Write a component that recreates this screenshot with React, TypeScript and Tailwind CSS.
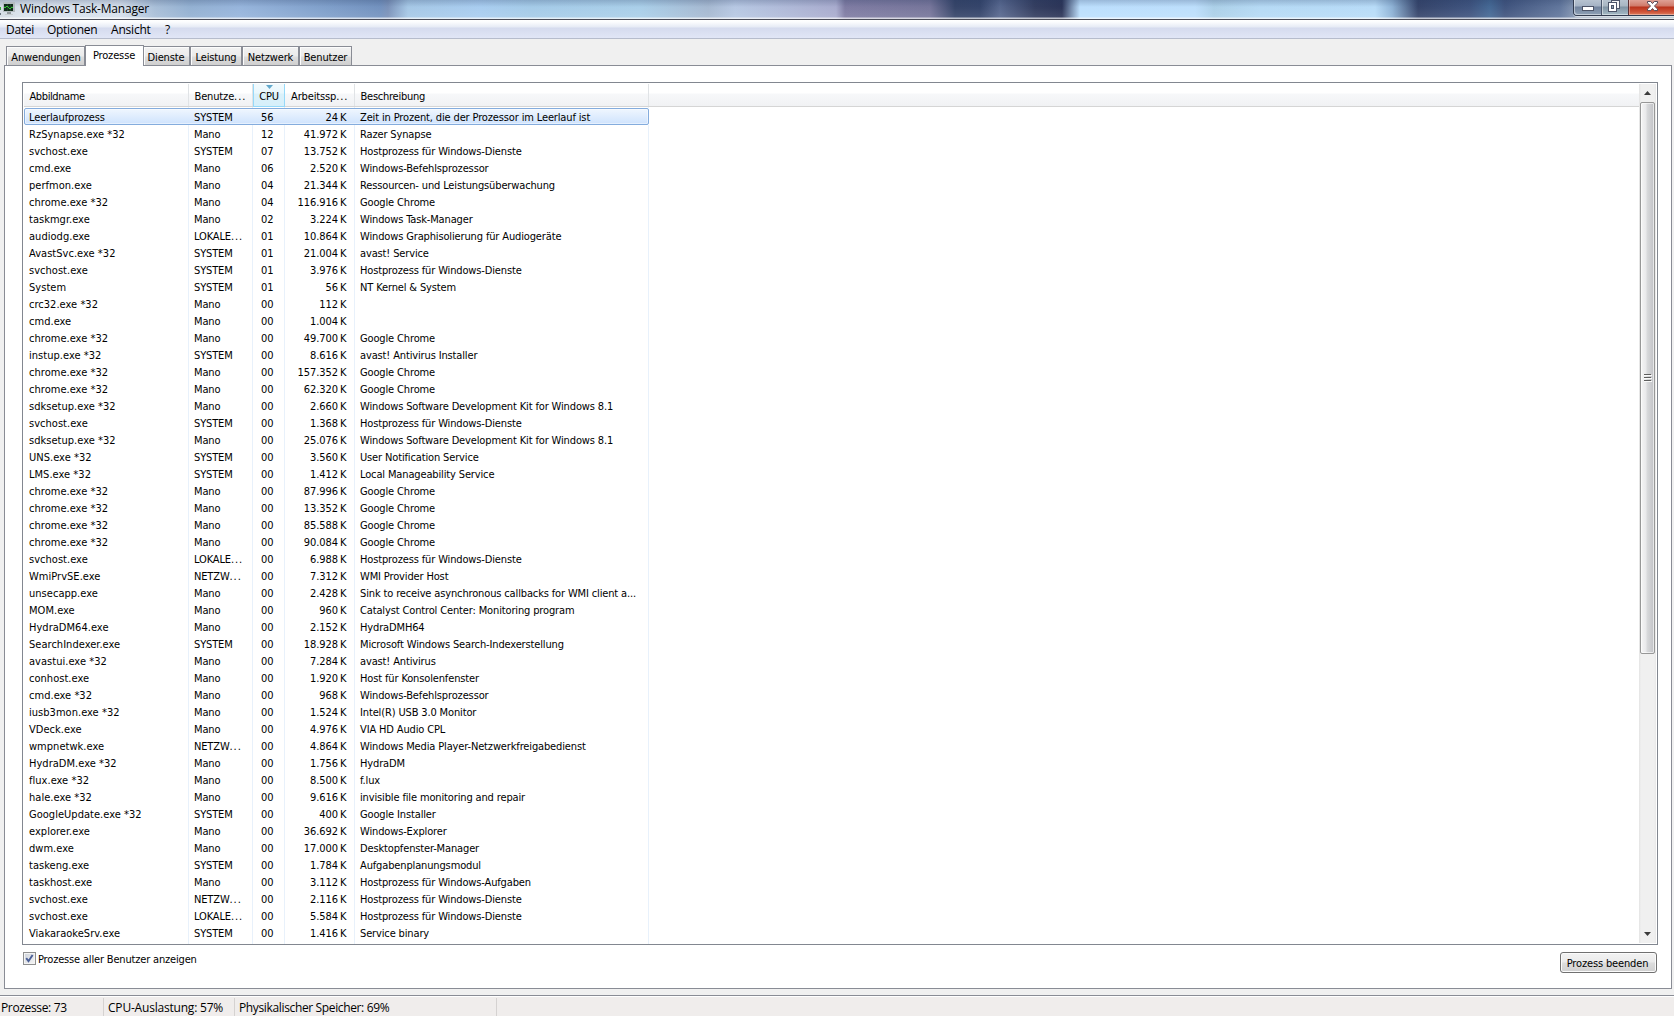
import type { ReactNode } from "react";
import { clsx } from "clsx";

type Process = [name: string, user: string, cpu: string, memory: string, description: string];

const processes: Process[] = [
    ["Leerlaufprozess", "SYSTEM", "56", "24", "Zeit in Prozent, die der Prozessor im Leerlauf ist"],
    ["RzSynapse.exe *32", "Mano", "12", "41.972", "Razer Synapse"],
    ["svchost.exe", "SYSTEM", "07", "13.752", "Hostprozess für Windows-Dienste"],
    ["cmd.exe", "Mano", "06", "2.520", "Windows-Befehlsprozessor"],
    ["perfmon.exe", "Mano", "04", "21.344", "Ressourcen- und Leistungsüberwachung"],
    ["chrome.exe *32", "Mano", "04", "116.916", "Google Chrome"],
    ["taskmgr.exe", "Mano", "02", "3.224", "Windows Task-Manager"],
    ["audiodg.exe", "LOKALE...", "01", "10.864", "Windows Graphisolierung für Audiogeräte"],
    ["AvastSvc.exe *32", "SYSTEM", "01", "21.004", "avast! Service"],
    ["svchost.exe", "SYSTEM", "01", "3.976", "Hostprozess für Windows-Dienste"],
    ["System", "SYSTEM", "01", "56", "NT Kernel & System"],
    ["crc32.exe *32", "Mano", "00", "112", ""],
    ["cmd.exe", "Mano", "00", "1.004", ""],
    ["chrome.exe *32", "Mano", "00", "49.700", "Google Chrome"],
    ["instup.exe *32", "SYSTEM", "00", "8.616", "avast! Antivirus Installer"],
    ["chrome.exe *32", "Mano", "00", "157.352", "Google Chrome"],
    ["chrome.exe *32", "Mano", "00", "62.320", "Google Chrome"],
    ["sdksetup.exe *32", "Mano", "00", "2.660", "Windows Software Development Kit for Windows 8.1"],
    ["svchost.exe", "SYSTEM", "00", "1.368", "Hostprozess für Windows-Dienste"],
    ["sdksetup.exe *32", "Mano", "00", "25.076", "Windows Software Development Kit for Windows 8.1"],
    ["UNS.exe *32", "SYSTEM", "00", "3.560", "User Notification Service"],
    ["LMS.exe *32", "SYSTEM", "00", "1.412", "Local Manageability Service"],
    ["chrome.exe *32", "Mano", "00", "87.996", "Google Chrome"],
    ["chrome.exe *32", "Mano", "00", "13.352", "Google Chrome"],
    ["chrome.exe *32", "Mano", "00", "85.588", "Google Chrome"],
    ["chrome.exe *32", "Mano", "00", "90.084", "Google Chrome"],
    ["svchost.exe", "LOKALE...", "00", "6.988", "Hostprozess für Windows-Dienste"],
    ["WmiPrvSE.exe", "NETZW...", "00", "7.312", "WMI Provider Host"],
    ["unsecapp.exe", "Mano", "00", "2.428", "Sink to receive asynchronous callbacks for WMI client a..."],
    ["MOM.exe", "Mano", "00", "960", "Catalyst Control Center: Monitoring program"],
    ["HydraDM64.exe", "Mano", "00", "2.152", "HydraDMH64"],
    ["SearchIndexer.exe", "SYSTEM", "00", "18.928", "Microsoft Windows Search-Indexerstellung"],
    ["avastui.exe *32", "Mano", "00", "7.284", "avast! Antivirus"],
    ["conhost.exe", "Mano", "00", "1.920", "Host für Konsolenfenster"],
    ["cmd.exe *32", "Mano", "00", "968", "Windows-Befehlsprozessor"],
    ["iusb3mon.exe *32", "Mano", "00", "1.524", "Intel(R) USB 3.0 Monitor"],
    ["VDeck.exe", "Mano", "00", "4.976", "VIA HD Audio CPL"],
    ["wmpnetwk.exe", "NETZW...", "00", "4.864", "Windows Media Player-Netzwerkfreigabedienst"],
    ["HydraDM.exe *32", "Mano", "00", "1.756", "HydraDM"],
    ["flux.exe *32", "Mano", "00", "8.500", "f.lux"],
    ["hale.exe *32", "Mano", "00", "9.616", "invisible file monitoring and repair"],
    ["GoogleUpdate.exe *32", "SYSTEM", "00", "400", "Google Installer"],
    ["explorer.exe", "Mano", "00", "36.692", "Windows-Explorer"],
    ["dwm.exe", "Mano", "00", "17.000", "Desktopfenster-Manager"],
    ["taskeng.exe", "SYSTEM", "00", "1.784", "Aufgabenplanungsmodul"],
    ["taskhost.exe", "Mano", "00", "3.112", "Hostprozess für Windows-Aufgaben"],
    ["svchost.exe", "NETZW...", "00", "2.116", "Hostprozess für Windows-Dienste"],
    ["svchost.exe", "LOKALE...", "00", "5.584", "Hostprozess für Windows-Dienste"],
    ["ViakaraokeSrv.exe", "SYSTEM", "00", "1.416", "Service binary"],
];

const columns = "grid grid-cols-[165px_64px_32px_70px_294px] w-[625px]";
const tahoma = "font-['DejaVu_Sans_Condensed','DejaVu_Sans',sans-serif] text-[11px] tracking-[-0.14px]";

// the dots of a cut-off label stand further apart than its letters
const Clipped = ({ text }: { text: string }) => {
    if (!text.endsWith("...")) return <>{text}</>;
    return <>{text.slice(0, -3)}<span className="tracking-[0.9px]">...</span></>;
};

const TitleBar = () => (
    <div className="relative h-[20px] shrink-0 flex justify-between overflow-hidden border-b border-[#4b4d59] bg-[linear-gradient(90deg,#d3dce4_0px,#dbe4ee_30px,#d6e0ec_120px,#a9bfd8_155px,#94b1d2_190px,#97b5dc_240px,#7f9fca_330px,#7392bf_380px,#7b92b9_388px,#a6c8e6_408px,#a9cdf0_480px,#a5cbe8_530px,#aacfe9_640px,#a6b9d1_708px,#b7c8e3_735px,#a9acce_836px,#7f7ca3_845px,#77769b_930px,#364569_955px,#35456b_980px,#58688f_1000px,#343e60_1035px,#2c3558_1062px,#bcdffd_1080px,#bddffc_1195px,#acd0e8_1214px,#b6daf5_1260px,#b8dcf8_1375px,#8fb3d6_1392px,#36456b_1418px,#3f547f_1470px,#456995_1490px,#41557f_1505px,#62779d_1560px,#8fa0b8_1580px,#9db4bd_1674px)]">
        {/* glass shading */}
        <div className="absolute inset-0 bg-[linear-gradient(180deg,rgba(30,50,90,0.22)_0px,rgba(30,50,90,0)_7px,rgba(255,255,255,0.08)_17px,rgba(255,255,255,0.7)_18px)]" />
        <div className="relative flex items-center h-[18px]">
            <svg width="20" height="18" viewBox="0 0 20 18" shapeRendering="crispEdges">
                <rect x="0" y="7" width="1" height="3" fill="#39a83b" />
                <rect x="0" y="13" width="1" height="2" fill="#6b7681" />
                <rect x="3" y="2" width="12" height="10" fill="#b4bcc0" />
                <rect x="4" y="4" width="9" height="7" fill="#10291a" />
                <path d="M4 6.5h9M7.5 4v7M10.5 4v7" stroke="#1d4028" strokeWidth="1" fill="none" />
                <path d="M4 7.5h2M6 6.5h2M8 7.5h1M9 8.5h2M11 7.5h2" stroke="#35c637" strokeWidth="1" fill="none" />
                <rect x="7" y="12" width="4" height="2" fill="#929a9e" />
                <rect x="5" y="14" width="8" height="1" fill="#c7cdd0" />
            </svg>
            <span className="text-xs tracking-[-0.2px] leading-[18px]">Windows Task-Manager</span>
        </div>
        <div className="relative flex h-[16px] w-[101px] rounded-bl-[4px] border-l border-b border-[#323c50] shadow-[0_1px_0_rgba(255,255,255,0.6)]">
            <div className="w-[28px] h-full border-r border-[#49566c] rounded-bl-[3px] bg-[linear-gradient(180deg,#b7c3d0_0px,#a5b3c5_6px,#71839d_7px,#8ea0b5_15px)] shadow-[inset_1px_-1px_0_rgba(255,255,255,0.45)]">
                <svg width="27" height="15" viewBox="0 0 27 15" shapeRendering="crispEdges">
                    <rect x="8.5" y="6.5" width="11" height="4" fill="#fff" stroke="#4c5468" />
                </svg>
            </div>
            <div className="w-[27px] h-full border-r border-[#5c3136] bg-[linear-gradient(180deg,#b7c3cf_0px,#a8b6c2_6px,#8093a3_7px,#a5bbc6_15px)] shadow-[inset_1px_-1px_0_rgba(255,255,255,0.45)]">
                <svg width="26" height="15" viewBox="0 0 26 15" shapeRendering="crispEdges">
                    <rect x="9.5" y="0.5" width="8" height="8" fill="#f5f5f5" stroke="#4c5468" />
                    <rect x="6.5" y="2.5" width="8" height="9" fill="#fff" stroke="#4c5468" />
                    <rect x="9.5" y="5.5" width="2" height="3" fill="#8fa3b5" stroke="#4c5468" />
                </svg>
            </div>
            <div className="w-[46px] h-full bg-[linear-gradient(180deg,#dfa095_0px,#d07a6a_6px,#b9321c_7px,#d0553a_12px,#dc8060_15px)] shadow-[inset_1px_-1px_0_rgba(255,255,255,0.35)]">
                <svg width="45" height="15" viewBox="0 0 45 15">
                    <path d="M18.5 1.5h3.2l1.8 2.1 1.8-2.1h3.2v1.6L25.4 6l3.1 3v1.6h-3.2l-1.8-2.1-1.8 2.1h-3.2V9l3.1-3-3.1-2.9z" fill="#fff" stroke="#574a58" />
                </svg>
            </div>
        </div>
    </div>
);

const MenuBar = () => (
    <div className="flex h-[19px] shrink-0 border-b border-[#b6bccc] pl-[6px] text-xs leading-[20px] bg-[linear-gradient(180deg,#ffffff_0px,#fbfcfe_2px,#e6ebf5_7px,#d5dbee_8px,#e1e6f6_18px)]">
        <span className="w-[41px] tracking-[-0.3px]">Datei</span>
        <span className="w-[64px] tracking-[-0.3px]">Optionen</span>
        <span className="w-[54px] tracking-[-0.2px]">Ansicht</span>
        <span>?</span>
    </div>
);

const Tab = ({ width, children }: { width: string; children: ReactNode }) => (
    <div className={clsx("h-[19px] border border-b-0 border-[#898c95] text-center leading-[21px] bg-[linear-gradient(180deg,#f2f2f2_0px,#ebebeb_9px,#dddddd_10px,#cfcfcf_18px)] shadow-[inset_1px_1px_0_#fcfcfc]", width)}>
        {children}
    </div>
);

const Tabs = () => (
    <div className={clsx("relative flex h-[26px] shrink-0 items-end pl-[6px]", tahoma)}>
        <Tab width="w-[79px] pl-px">Anwendungen</Tab>
        <div className="relative z-10 -mb-px h-[21px] w-[59px] border border-b-0 border-[#898c95] bg-white pr-px text-center leading-[19px]">Prozesse</div>
        <Tab width="w-[46px] border-l-0 pr-px">Dienste</Tab>
        <Tab width="w-[52px]">Leistung</Tab>
        <Tab width="w-[57px]">Netzwerk</Tab>
        <Tab width="w-[53px]">Benutzer</Tab>
    </div>
);

const TableHeader = () => (
    <div className="h-[23px] border-b border-[#d5d5d5] bg-[linear-gradient(180deg,#ffffff_0px,#ffffff_9px,#f7f8fa_10px,#f1f2f4_22px)]">
        <div className={clsx(columns, "h-[22px] leading-[26px]")}>
            <div className="h-[22px] border-r border-[#e0e3e6] pl-[5.5px] tracking-[-0.4px]">Abbildname</div>
            <div className="h-[22px] border-r border-[#e0e3e6] pl-[5.5px]"><Clipped text="Benutze..." /></div>
            <div className="relative border-x border-[#96d9f9] text-center h-[23px] border-b bg-[linear-gradient(180deg,#f2fafd_0px,#e9f7fd_9px,#dbf1fa_10px,#d6effa_22px)]">
                CPU
                <svg className="absolute left-[12px] top-[1px]" width="7" height="4" viewBox="0 0 7 4">
                    <path d="M0 0h7L3.5 4z" fill="#62a8cc" />
                </svg>
            </div>
            <div className="h-[22px] border-r border-[#e0e3e6] pl-[6px]"><Clipped text="Arbeitssp..." /></div>
            <div className="h-[22px] border-r border-[#e0e3e6] pl-[5.5px] tracking-[-0.25px]">Beschreibung</div>
        </div>
    </div>
);

const Row = ({ process, selected }: { process: Process; selected: boolean }) => {
    const [name, user, cpu, memory, description] = process;
    const cell = clsx("relative h-[17px] border-r whitespace-nowrap", selected ? "border-transparent" : "border-[#e8f1fb]");

    return (
        <div className={clsx(columns, "relative h-[17px] leading-[20px]")}>
            {selected && (
                <div className="absolute inset-0 rounded-[2px] border border-[#84acdd] bg-[linear-gradient(180deg,#eff6fe,#cfe3fd)] shadow-[inset_0_0_0_1px_rgba(255,255,255,0.45)]" />
            )}
            <div className={clsx(cell, "pl-[5px]", selected ? "tracking-[-0.14px]" : "tracking-[0.03px]")}>{name}</div>
            <div className={clsx(cell, "pl-[5px]")}><Clipped text={user} /></div>
            <div className={clsx(cell, "pl-[8px] tracking-normal")}>{cpu}</div>
            <div className={clsx(cell, "flex justify-end gap-[2px] pr-[7.5px] tracking-[-0.05px]")}>
                <span>{memory}</span>
                <span>K</span>
            </div>
            <div className={clsx(cell, "pl-[5px]")}>{description}</div>
        </div>
    );
};

// thin strip that carries the column lines on above and below the rows
const GridStrip = ({ height }: { height: string }) => (
    <div className={clsx(columns, height)}>
        {[0, 1, 2, 3, 4].map(i => <div key={i} className="border-r border-[#e8f1fb]" />)}
    </div>
);

const ScrollBar = () => (
    <div className="flex w-[17px] shrink-0 flex-col items-center bg-[linear-gradient(90deg,#e3e3e3_0px,#f0f0f0_2px,#f0f0f0_15px,#e8e8e8_17px)]">
        <svg width="17" height="18" viewBox="0 0 17 18">
            <path d="M5 11l3.5-4 3.5 4z" fill="#3c3c3c" />
        </svg>
        <div className="flex h-[552px] w-[15px] items-center justify-center rounded-[2px] border border-[#979797] bg-[linear-gradient(90deg,#f5f5f5_0px,#e9e9eb_5px,#d9dadc_6px,#c4c5c9_12px)] pb-[2px] shadow-[inset_0_0_0_1px_rgba(255,255,255,0.6)]">
            <svg width="8" height="9" viewBox="0 0 8 9" shapeRendering="crispEdges">
                <path d="M0 1.5h7M0 4.5h7M0 7.5h7" stroke="#5e5e5e" />
                <path d="M0 2.5h8M0 5.5h8M0 8.5h8" stroke="#fafafa" />
            </svg>
        </div>
        <div className="grow" />
        <svg width="17" height="18" viewBox="0 0 17 18">
            <path d="M5 7l3.5 4L12 7z" fill="#3c3c3c" />
        </svg>
    </div>
);

const ProcessList = () => (
    <div className="flex h-[863px] w-[1636px] border border-[#828790] bg-white p-px">
        <div className="grow">
            <TableHeader />
            <GridStrip height="h-px" />
            {processes.map((process, i) => <Row key={i} process={process} selected={i === 0} />)}
            <GridStrip height="h-[3px]" />
        </div>
        <ScrollBar />
    </div>
);

const StatusBar = () => (
    <div className="flex h-[21px] shrink-0 border-t border-[#898c95] bg-[#f0edec] pt-[2px] text-xs leading-[18px] shadow-[inset_0_1px_0_#ffffff]">
        <div className="w-[104px] border-r border-[#d5d2d1] pl-[1px] pt-px tracking-[-0.35px]">Prozesse: 73</div>
        <div className="w-[131px] border-r border-[#d5d2d1] pl-[4px] pt-px tracking-[-0.2px]">CPU-Auslastung: 57%</div>
        <div className="w-[262px] border-r border-[#d5d2d1] pl-[4px] pt-px tracking-[-0.36px]">Physikalischer Speicher: 69%</div>
    </div>
);

export default function App() {
    return (
        <div className="flex h-[1016px] w-[1674px] flex-col overflow-hidden bg-[#f0f0f0] font-['Open_Sans',sans-serif] text-black">
            <TitleBar />
            <MenuBar />
            <Tabs />
            <div className="ml-[4px] h-[924px] w-[1668px] shrink-0 border border-[#898c95] bg-white pl-[17px] pt-[16px]">
                <div className={tahoma}>
                    <ProcessList />
                    <div className="flex w-[1636px] justify-between pt-[7px] pr-px">
                        <label className="flex h-[13px] items-center gap-[2px] pl-px">
                            <span className="flex size-[13px] items-center justify-center border border-[#8e8f8f] bg-[linear-gradient(135deg,#cdd2da,#f6f6f6)] shadow-[inset_0_0_0_1px_#f4f4f4]">
                                <svg width="9" height="9" viewBox="0 0 9 9">
                                    <path d="M1.2 4.2l2.3 3L7.6 1" stroke="#4a5f97" strokeWidth="1.9" fill="none" />
                                </svg>
                            </span>
                            <span className="pt-[2px] leading-[14px] tracking-[-0.17px]">Prozesse aller Benutzer anzeigen</span>
                        </label>
                        <button className="h-[21px] w-[97px] rounded-[3px] border border-[#707070] bg-[linear-gradient(180deg,#f2f2f2_0px,#ebebeb_9px,#dddddd_10px,#cfcfcf_20px)] pr-[2px] pt-px shadow-[inset_0_0_0_1px_#fbfbfb] text-[11px] leading-[19px]">Prozess beenden</button>
                    </div>
                </div>
            </div>
            <div className="h-[6px] shrink-0" />
            <StatusBar />
        </div>
    );
}
